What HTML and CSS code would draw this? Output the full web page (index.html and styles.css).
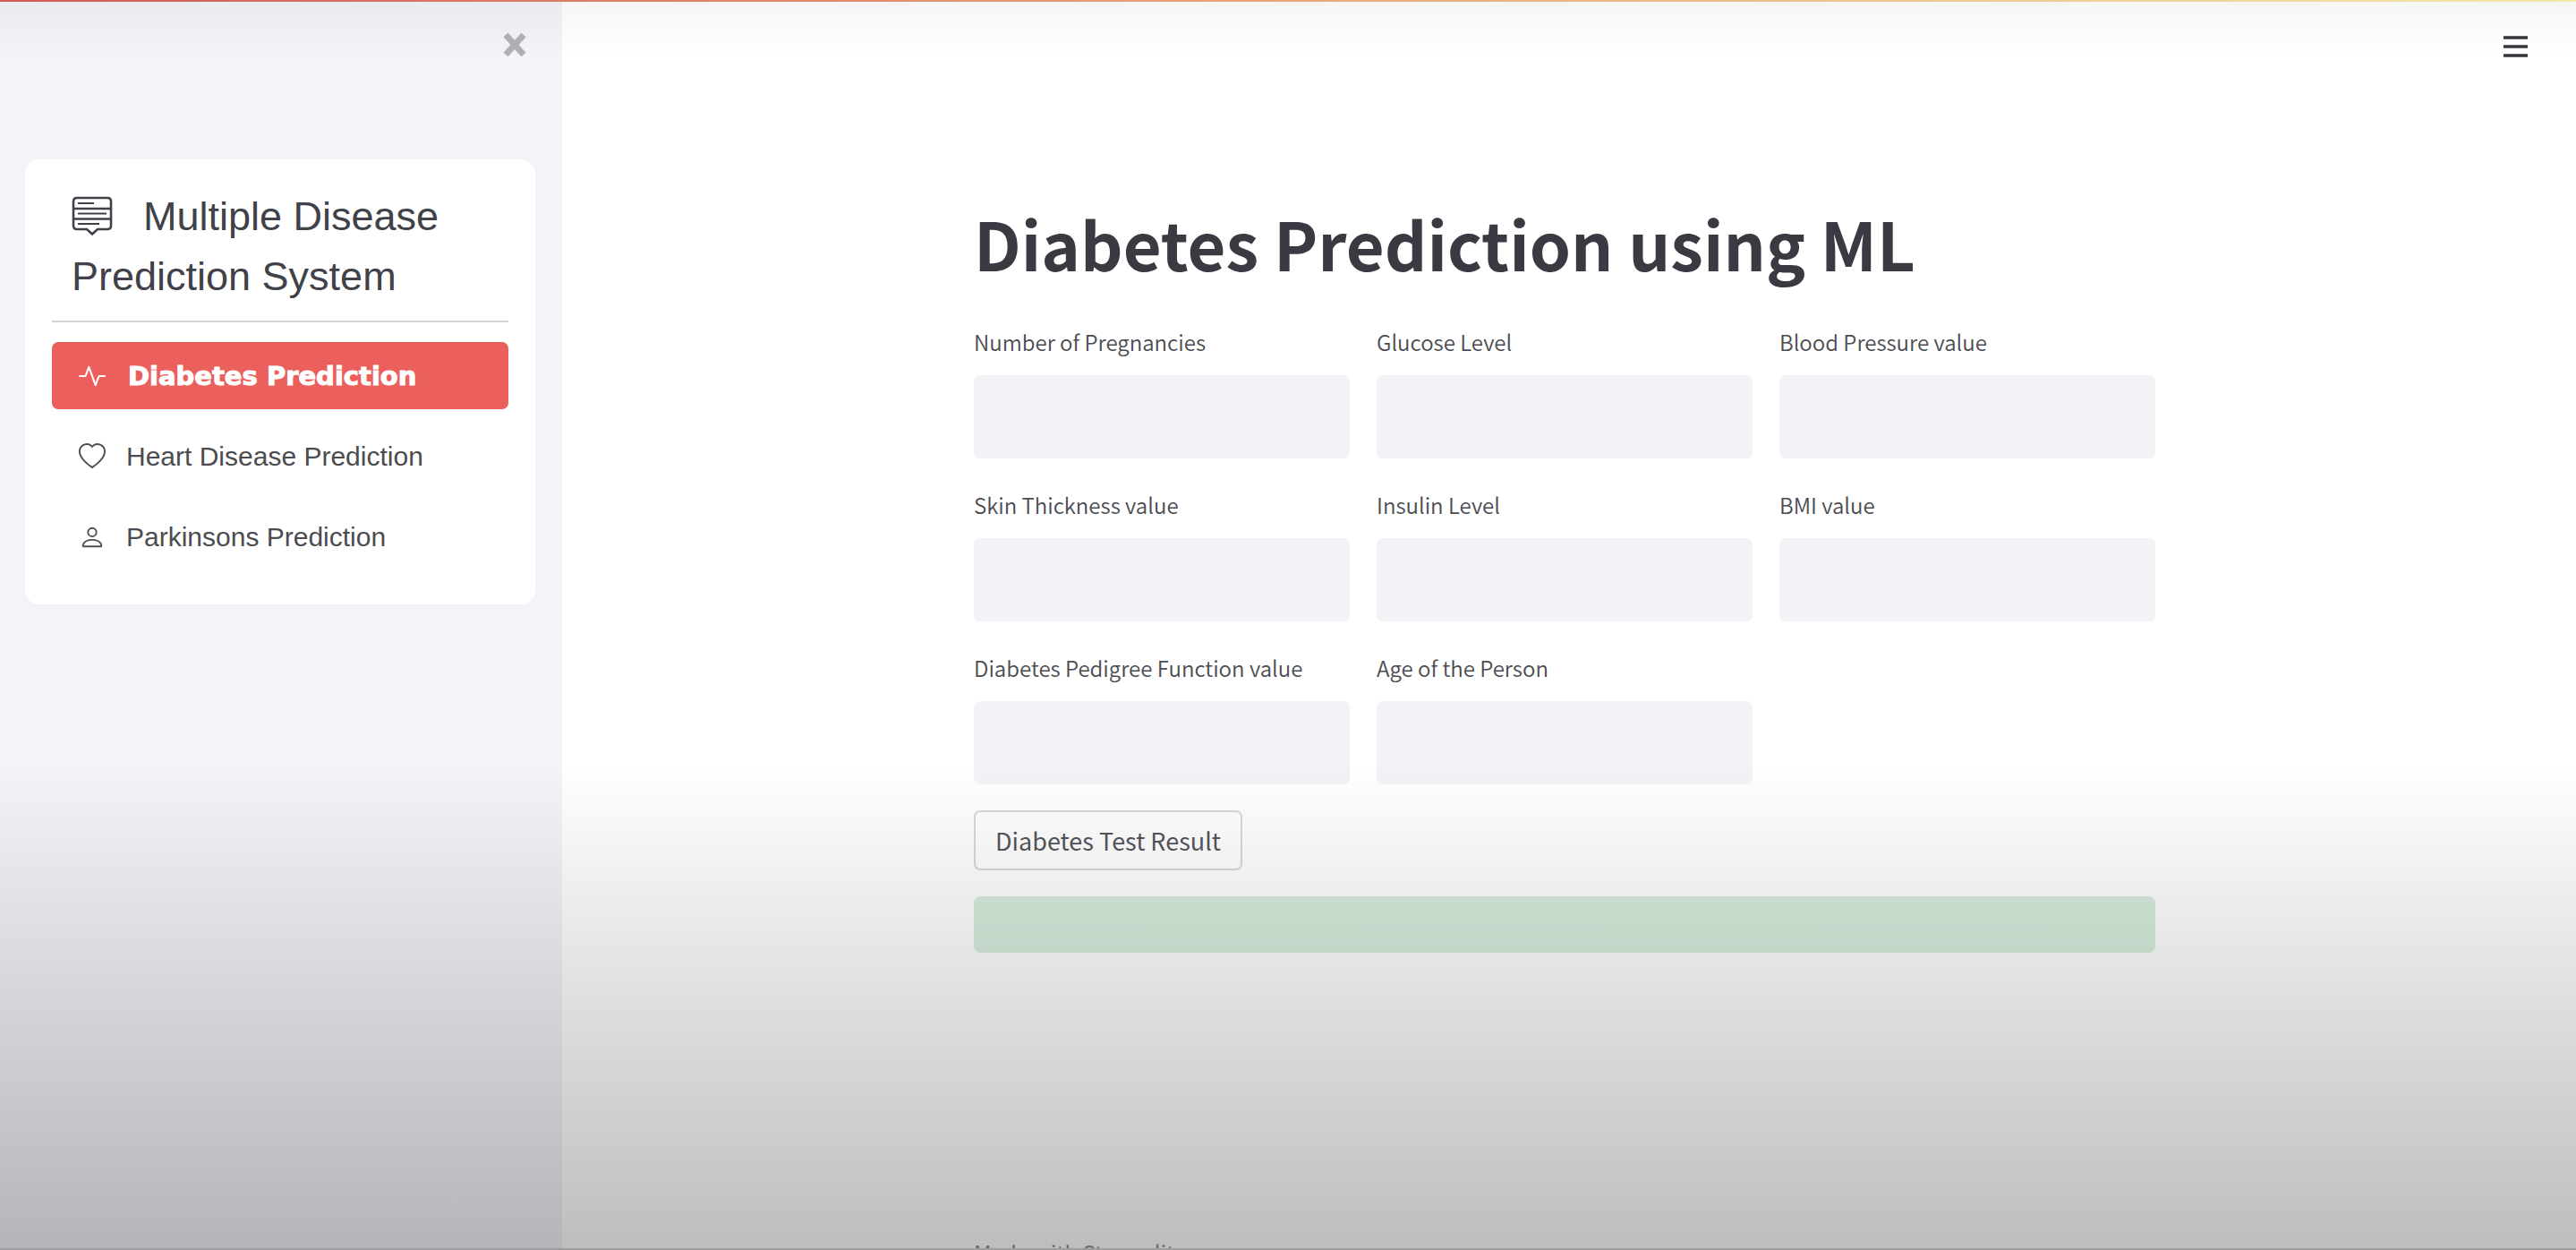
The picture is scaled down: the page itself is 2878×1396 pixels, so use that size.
FILE: index.html
```html
<!DOCTYPE html>
<html lang="en">
<head>
<meta charset="utf-8">
<title>Multiple Disease Prediction System</title>
<link rel="stylesheet" href="styles.css">
</head>
<body>
<div class="app">
  <aside class="sidebar">
    <div class="sidebar-top">
      <button class="icon-button close" type="button" aria-label="Close sidebar">
        <svg width="28" height="28" viewBox="0 0 28 28"><path d="M4 3 24 25M24 3 4 25" fill="none" stroke="currentColor" stroke-width="7"/></svg>
      </button>
    </div>
    <div class="menu-card">
      <h2 class="menu-title"><svg class="menu-icon" width="46" height="46" viewBox="0 0 46 46" fill="none" stroke="currentColor" stroke-width="2.6"><path d="M6 3H40Q44 3 44 7V34Q44 38 40 38H29L23 43.5 17 38H6Q2 38 2 34V7Q2 3 6 3ZM2 15H44M2 26.500H44"/><path d="M7 9H25M7 20.500H39M7 32H31" stroke-width="2"/></svg>Multiple Disease Prediction System</h2>
      <nav class="menu">
        <a class="menu-link active" href="#diabetes"><svg width="30" height="30" viewBox="0 0 16 16" fill="none" stroke="currentColor" stroke-width="1.1" stroke-linejoin="round" stroke-linecap="round"><path d="M.6 8H4L6 2.600 10 13.400 12 8H15.400"/></svg>Diabetes Prediction</a>
        <a class="menu-link" href="#heart"><svg width="30" height="30" viewBox="0 0 16 16" fill="currentColor"><path d="m8 2.748-.717-.737C5.6.281 2.514.878 1.4 3.053c-.523 1.023-.641 2.5.314 4.385.92 1.815 2.834 3.989 6.286 6.357 3.452-2.368 5.365-4.542 6.286-6.357.955-1.886.838-3.362.314-4.385C13.486.878 10.4.28 8.717 2.01L8 2.748zM8 15C-7.333 4.868 3.279-3.04 7.824 1.143c.06.055.119.112.176.171a3.12 3.12 0 0 1 .176-.17C12.72-3.042 23.333 4.867 8 15z"/></svg>Heart Disease Prediction</a>
        <a class="menu-link" href="#parkinsons"><svg width="30" height="30" viewBox="0 0 16 16" fill="currentColor"><path d="M8 8a3 3 0 1 0 0-6 3 3 0 0 0 0 6zm2-3a2 2 0 1 1-4 0 2 2 0 0 1 4 0zm4 8c0 1-1 1-1 1H3s-1 0-1-1 1-4 6-4 6 3 6 4zm-1-.004c-.001-.246-.154-.986-.832-1.664C11.516 10.68 10.289 10 8 10c-2.29 0-3.516.68-4.168 1.332-.678.678-.83 1.418-.832 1.664h10z"/></svg>Parkinsons Prediction</a>
      </nav>
    </div>
  </aside>
  <main class="main">
    <header class="toolbar">
      <button class="icon-button burger" type="button" aria-label="Main menu">
        <svg width="28" height="26" viewBox="0 0 28 26"><path d="M0 3H27M0 13H27M0 23H27" fill="none" stroke="currentColor" stroke-width="3.500"/></svg>
      </button>
    </header>
    <div class="content">
      <h1>Diabetes Prediction using ML</h1>
      <form class="form">
        <div class="fields">
          <label class="field">Number of Pregnancies<input type="text"></label>
          <label class="field">Glucose Level<input type="text"></label>
          <label class="field">Blood Pressure value<input type="text"></label>
          <label class="field">Skin Thickness value<input type="text"></label>
          <label class="field">Insulin Level<input type="text"></label>
          <label class="field">BMI value<input type="text"></label>
          <label class="field">Diabetes Pedigree Function value<input type="text"></label>
          <label class="field">Age of the Person<input type="text"></label>
        </div>
        <button class="submit" type="button">Diabetes Test Result</button>
        <output class="result"></output>
      </form>
      <footer class="footer">Made with Streamlit</footer>
    </div>
  </main>
</div>
</body>
</html>
```
FILE: styles.css
```css
* { box-sizing: border-box; }

body {
  margin: 0;
  color: #3a3a43;
  font-family: "Noto Sans CJK SC", "Noto Sans", sans-serif;
}

.app {
  position: relative;
  display: flex;
  height: 100vh;
  overflow: hidden;
  background: #fff;
}

/* shading over the whole window */
.app::after {
  content: "";
  position: absolute;
  inset: 0;
  pointer-events: none;
  background:
    linear-gradient(90deg, #cf5a58, #e8a878 50%, #f3e8a8) top / 100% 2px no-repeat,
    linear-gradient(#a09da0, #a09da0) bottom / 100% 2px no-repeat,
    linear-gradient(rgba(0, 0, 0, .04), transparent) top / 100% 66px no-repeat,
    linear-gradient(transparent, rgba(0, 0, 0, .26)) bottom / 100% 39vh no-repeat;
}

.sidebar {
  flex: none;
  width: 628px;
  padding: 0 30px 0 28px;
  background: #f2f4f8;
}

.sidebar-top {
  display: flex;
  justify-content: flex-end;
  height: 178px;
  padding-top: 36px;
  padding-right: 9px;
}

.icon-button {
  display: block;
  height: 28px;
  padding: 0;
  border: 0;
  background: none;
  cursor: pointer;
}
.icon-button svg { display: block; }
.close { color: #b0b1b5; }
.burger { color: #38363c; }

.menu-card {
  padding: 30px 30px 38px;
  border-radius: 16px;
  background: #fff;
  font-family: "Liberation Sans", Arial, sans-serif;
}

.menu-title {
  margin: 0 0 22px;
  padding: 0 22px 16px;
  border-bottom: 2px solid #d3d4d6;
  color: #414149;
  font-size: 45px;
  font-weight: 400;
  line-height: 67px;
}
.menu-icon {
  margin-right: 34px;
  vertical-align: -7px;
}

.menu {
  display: flex;
  flex-direction: column;
  gap: 15px;
}
.menu-link {
  display: flex;
  align-items: center;
  gap: 23px;
  height: 75px;
  padding: 0 30px;
  border-radius: 7px;
  color: #4b4c50;
  font-size: 30px;
  text-decoration: none;
}
.menu-link.active {
  gap: 25px;
  background: #eb605c;
  color: #fff;
  font-family: "DejaVu Sans", sans-serif;
  font-size: 29px;
  font-weight: 700;
  -webkit-text-stroke: 1px #fff;
}

.main {
  flex: 1;
  min-width: 0;
}

.toolbar {
  display: flex;
  justify-content: flex-end;
  height: 177px;
  padding: 38px 53px 0 0;
}

.content {
  width: 1330px;
  max-width: 100%;
  margin: 0 auto;
  padding-right: 10px;
}

h1 {
  margin: 0;
  padding: 42px 0 39px;
  font-size: 74px;
  font-weight: 700;
  line-height: 104px;
}

.form {
  display: flex;
  flex-direction: column;
  align-items: flex-start;
  gap: 29px;
}
.fields {
  display: grid;
  grid-template-columns: repeat(3, 1fr);
  gap: 32px 30px;
  width: 100%;
}
.field {
  display: flex;
  flex-direction: column;
  gap: 17px;
  color: #4b4c52;
  font-size: 24px;
  font-weight: 350;
  line-height: 40px;
}
.field input {
  width: 100%;
  height: 93px;
  border: 0;
  border-radius: 7px;
  background: #f2f3f7;
  font: inherit;
}
.submit {
  height: 67px;
  padding: 0 22px;
  border: 2px solid #d8d8da;
  border-radius: 7px;
  background: #fff;
  color: #54555b;
  font: inherit;
  font-size: 27px;
}
.result {
  width: 100%;
  height: 63px;
  border-radius: 7px;
  background: #d8eedf;
}
.footer {
  padding-top: 317px;
  color: #8d8d92;
  font-size: 24px;
  line-height: 36px;
}
```
